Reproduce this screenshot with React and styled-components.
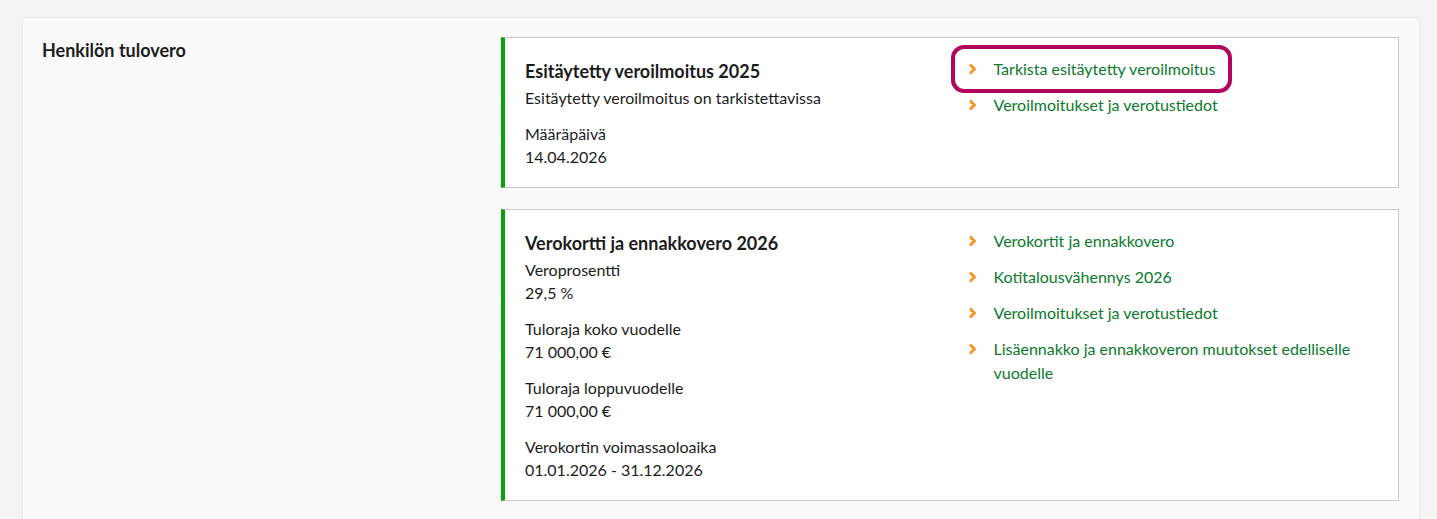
import styled, { createGlobalStyle } from 'styled-components';

const GlobalStyle = createGlobalStyle`
  html, body {
    margin: 0;
    padding: 0;
    background: #f3f3f3;
  }
  body {
    font-family: Lato, "Liberation Sans", sans-serif;
    color: #1c1c1c;
  }
`;

const Page = styled.div`
  padding: 17px 17px 0 22px;
`;

const Panel = styled.section`
  display: grid;
  grid-template-columns: 459px 1fr;
  background: #fafafa;
  border: 1px solid #ebebeb;
  border-bottom: none;
  border-radius: 5px 5px 0 0;
  padding: 19px 20px 24px 19px;
`;

const Heading = styled.h2`
  margin: 0;
  font-size: 18px;
  font-weight: 700;
  line-height: 26px;
  color: #1c1c1c;
`;

const Cards = styled.div`
  display: flex;
  flex-direction: column;
  gap: 21px;
`;

const Card = styled.article`
  display: grid;
  grid-template-columns: 1fr 1fr;
  column-gap: 32px;
  background: #fff;
  border: 1px solid #c9c9c9;
  border-left: 4px solid #0aa20a;
  padding: 19px 20px 19px 20px;
`;

const Info = styled.div`
  display: flex;
  flex-direction: column;
`;

const CardTitle = styled.h3`
  margin: 0 0 1px;
  font-size: 18px;
  font-weight: 700;
  line-height: 28px;
  color: #1c1c1c;
`;

const Group = styled.div`
  display: flex;
  flex-direction: column;
  & + & {
    margin-top: 13px;
  }
`;

const Line = styled.div`
  font-size: 16px;
  line-height: 23px;
`;

const Links = styled.ul`
  list-style: none;
  margin: 0;
  padding: 0;
  display: flex;
  flex-direction: column;
  gap: 12px;
`;

const LinkItem = styled.li`
  display: flex;
`;

const Link = styled.a`
  display: inline-flex;
  align-items: flex-start;
  padding: 3px 8px;
  margin: -3px -8px;
  border-radius: 4px;
  color: #0b7a2c;
  text-decoration: none;
  font-size: 16px;
  line-height: 24px;
  outline: ${p => (p.$focused ? '4px solid #b0045d' : 'none')};
  outline-offset: 5px;
`;

const Chevron = styled.span`
  flex: 0 0 auto;
  display: inline-flex;
  width: 10px;
  height: 24px;
  align-items: center;
  margin-right: 16px;
`;

const ChevronIcon = () => (
  <svg width="9" height="12" viewBox="0 0 9 12" aria-hidden="true">
    <path d="M2 1.5 L6.5 6 L2 10.5" fill="none" stroke="#f7931e" strokeWidth="2.7" />
  </svg>
);

const cards = [
  {
    title: 'Esitäytetty veroilmoitus 2025',
    groups: [
      ['Esitäytetty veroilmoitus on tarkistettavissa'],
      ['Määräpäivä', '14.04.2026'],
    ],
    links: [
      { text: 'Tarkista esitäytetty veroilmoitus', focused: true },
      { text: 'Veroilmoitukset ja verotustiedot' },
    ],
  },
  {
    title: 'Verokortti ja ennakkovero 2026',
    groups: [
      ['Veroprosentti', '29,5 %'],
      ['Tuloraja koko vuodelle', '71 000,00 €'],
      ['Tuloraja loppuvuodelle', '71 000,00 €'],
      ['Verokortin voimassaoloaika', '01.01.2026 - 31.12.2026'],
    ],
    links: [
      { text: 'Verokortit ja ennakkovero' },
      { text: 'Kotitalousvähennys 2026' },
      { text: 'Veroilmoitukset ja verotustiedot' },
      { text: 'Lisäennakko ja ennakkoveron muutokset edelliselle vuodelle' },
    ],
  },
];

export default function App() {
  return (
    <>
      <GlobalStyle />
      <Page>
        <Panel>
          <Heading>Henkilön tulovero</Heading>
          <Cards>
            {cards.map(card => (
              <Card key={card.title}>
                <Info>
                  <CardTitle>{card.title}</CardTitle>
                  {card.groups.map((g, i) => (
                    <Group key={i}>
                      {g.map(line => (
                        <Line key={line}>{line}</Line>
                      ))}
                    </Group>
                  ))}
                </Info>
                <Links>
                  {card.links.map(l => (
                    <LinkItem key={l.text}>
                      <Link href="#" $focused={l.focused}>
                        <Chevron>
                          <ChevronIcon />
                        </Chevron>
                        <span>{l.text}</span>
                      </Link>
                    </LinkItem>
                  ))}
                </Links>
              </Card>
            ))}
          </Cards>
        </Panel>
      </Page>
    </>
  );
}
